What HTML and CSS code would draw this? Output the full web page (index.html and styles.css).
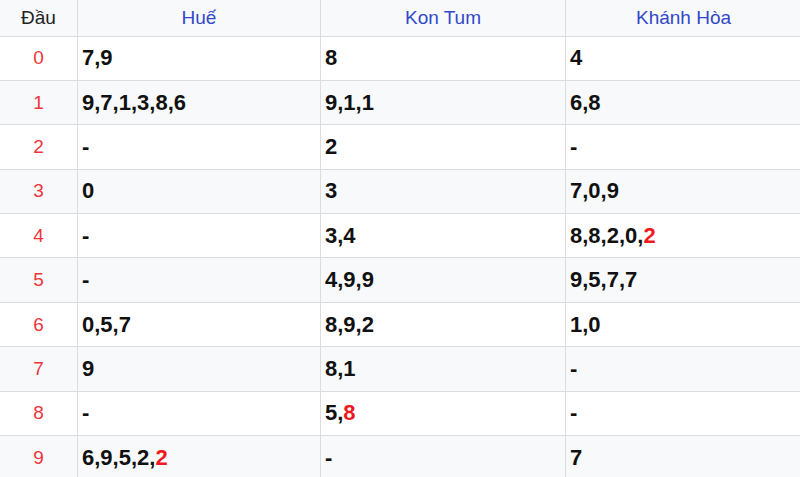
FILE: index.html
```html
<!DOCTYPE html>
<html lang="vi">
<head>
<meta charset="utf-8">
<link rel="stylesheet" href="styles.css">
</head>
<body>
<table class="loto">
  <colgroup>
    <col class="c-head">
    <col class="c-prov">
    <col class="c-prov2">
    <col class="c-prov3">
  </colgroup>
  <thead>
    <tr>
      <th class="dau">Đầu</th>
      <th class="prov">Huế</th>
      <th class="prov">Kon Tum</th>
      <th class="prov">Khánh Hòa</th>
    </tr>
  </thead>
  <tbody>
    <tr><td class="dau">0</td><td>7,9</td><td>8</td><td>4</td></tr>
    <tr><td class="dau">1</td><td>9,7,1,3,8,6</td><td>9,1,1</td><td>6,8</td></tr>
    <tr><td class="dau">2</td><td>-</td><td>2</td><td>-</td></tr>
    <tr><td class="dau">3</td><td>0</td><td>3</td><td>7,0,9</td></tr>
    <tr><td class="dau">4</td><td>-</td><td>3,4</td><td>8,8,2,0,<span class="hot">2</span></td></tr>
    <tr><td class="dau">5</td><td>-</td><td>4,9,9</td><td>9,5,7,7</td></tr>
    <tr><td class="dau">6</td><td>0,5,7</td><td>8,9,2</td><td>1,0</td></tr>
    <tr><td class="dau">7</td><td>9</td><td>8,1</td><td>-</td></tr>
    <tr><td class="dau">8</td><td>-</td><td>5,<span class="hot">8</span></td><td>-</td></tr>
    <tr><td class="dau">9</td><td>6,9,5,2,<span class="hot">2</span></td><td>-</td><td>7</td></tr>
  </tbody>
</table>
</body>
</html>
```

FILE: styles.css
```css
html, body {
  margin: 0;
  padding: 0;
  background: #ffffff;
  overflow: hidden;
}

.loto {
  border-collapse: collapse;
  table-layout: fixed;
  width: 802px;
  margin: 0 0 0 -1px;
  font-family: "Liberation Sans", Arial, sans-serif;
}

.c-head { width: 78px; }
.c-prov { width: 243px; }
.c-prov2 { width: 245px; }
.c-prov3 { width: 236px; }

.loto th,
.loto td {
  border: 1px solid #dcdcdc;
  padding: 0 0 0 4px;
  text-align: left;
  vertical-align: middle;
}

.loto thead tr {
  background: #f8f9fa;
  height: 36px;
}

.loto thead th {
  border-top: none;
  font-weight: normal;
  font-size: 19px;
  text-align: center;
  padding: 0;
  color: #3148c8;
}

.loto thead th.dau {
  color: #222222;
}

.loto tbody tr {
  height: 44.4px;
}

.loto tbody tr:nth-child(even) {
  background: #f8f9fa;
}

.loto tbody td {
  font-size: 22px;
  font-weight: bold;
  color: #111111;
}

.loto tbody td.dau {
  text-align: center;
  padding: 0;
  font-weight: normal;
  font-size: 19px;
  color: #f0353a;
}

.hot {
  color: #f01820;
}
```
